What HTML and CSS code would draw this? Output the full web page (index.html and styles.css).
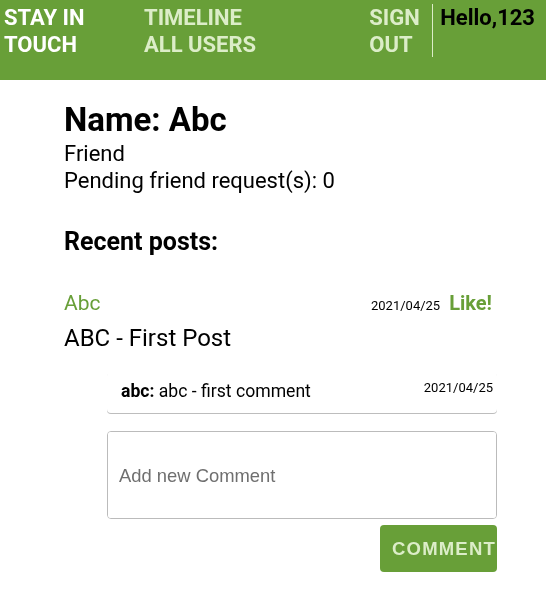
FILE: index.html
```html
<!DOCTYPE html>
<html>
<head>
<meta charset="utf-8">
<link rel="stylesheet" href="styles.css">
</head>
<body>
<header class="topbar">
  <div class="brand">STAY IN<br>TOUCH</div>
  <nav class="nav">
    <a class="nav-link">TIMELINE<br>ALL USERS</a>
  </nav>
  <div class="right">
    <a class="nav-link signout">SIGN<br>OUT</a>
    <div class="hello">Hello,123</div>
  </div>
</header>
<main class="content">
  <h1 class="name">Name: Abc</h1>
  <div class="info">Friend</div>
  <div class="info">Pending friend request(s): 0</div>
  <h2 class="recent">Recent posts:</h2>
  <section class="post">
    <div class="post-head">
      <span class="author">Abc</span>
      <span class="meta"><span class="date">2021/04/25</span><span class="like">Like!</span></span>
    </div>
    <div class="post-body">ABC - First Post</div>
    <div class="comments">
      <div class="comment">
        <span class="comment-text"><b>abc:</b> abc - first comment</span>
        <span class="date">2021/04/25</span>
      </div>
      <textarea class="new-comment" placeholder="Add new Comment"></textarea>
      <div class="actions"><button class="btn">COMMENT</button></div>
    </div>
  </section>
</main>
</body>
</html>
```
FILE: styles.css
```css
html, body { margin: 0; padding: 0; background: #fff; }
body { font-family: Roboto, "Liberation Sans", sans-serif; color: #000; }
.topbar {
  height: 80px;
  background: #689f38;
  display: flex;
  align-items: flex-start;
  box-sizing: border-box;
  padding: 4px 11px 0 4px;
  font-weight: 700;
  font-size: 22px;
  line-height: 27px;
}
.brand { color: #fff; width: 140px; }
.nav-link { color: #dcedc8; display: block; }
.right { margin-left: auto; display: flex; align-items: flex-start; }
.signout { width: 63px; }
.hello { color: #000; border-left: 1px solid #dcedc8; padding-left: 7px; height: 53px; margin-top: 0; }
.content { padding: 0 49px 0 64px; }
.name { font-size: 33px; font-weight: 700; margin: 20px 0 0; line-height: 40px; }
.info { font-size: 22px; line-height: 27px; }
.recent { font-size: 25px; font-weight: 700; margin: 33px 0 0; line-height: 30px; }
.post { margin-top: 33px; }
.post-head { display: flex; justify-content: space-between; align-items: baseline; line-height: 26px; }
.author { color: #689f38; font-size: 21px; }
.meta { display: flex; align-items: baseline; gap: 9px; }
.date { font-size: 13px; line-height: 15px; }
.like { color: #689f38; font-weight: 700; font-size: 20px; padding-right: 5px; }
.post-body { font-size: 24px; line-height: 30px; margin-top: 7px; }
.comments { margin: 19px 0 0 43px; }
.comment {
  display: flex; justify-content: space-between; align-items: flex-start;
  padding: 8px 4px 11px 14px;
  border-radius: 4px;
  box-shadow: 0 1px 0 0 #bdbdbd;
  font-size: 17.6px; line-height: 22px;
}
.new-comment {
  display: block; box-sizing: border-box; width: 100%; height: 88px;
  margin: 18px 0 0; border: 1px solid #bbb; border-radius: 4px;
  padding: 33px 11px; resize: none;
  font-family: "Liberation Sans", Arial, sans-serif; font-size: 18.4px; line-height: 21px;
}
.new-comment::placeholder { color: #6f6f6f; }
.actions { display: flex; justify-content: flex-end; margin-top: 6px; }
.btn {
  width: 117px; height: 47px; background: #689f38; border: none; border-radius: 4px;
  color: #dcedc8; font-family: "Liberation Sans", Arial, sans-serif; font-weight: 700; font-size: 18.5px;
  padding: 0 0 0 12px; text-align: left; overflow: hidden; white-space: nowrap; letter-spacing: 1.2px;
}
```
